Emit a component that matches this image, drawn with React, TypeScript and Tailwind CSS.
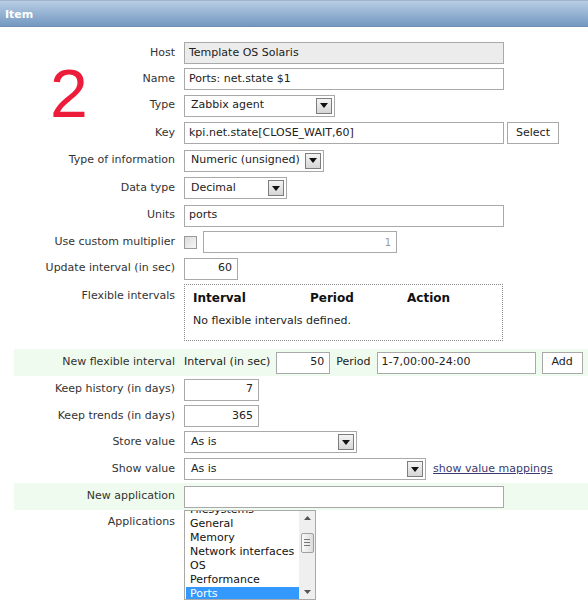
import React from 'react';

const FONT = "font-['DejaVu_Sans',Verdana,sans-serif]";

function Arrow() {
    return (
        <span className="absolute right-[2px] top-1/2 -translate-y-1/2 w-[16px] h-[16px] border border-[#7d7d7d] bg-gradient-to-b from-[#f4f4f4] to-[#d6d6d6] flex items-center justify-center">
            <svg width="8" height="5" viewBox="0 0 8 5">
                <path d="M0 0 L8 0 L4 5 Z" fill="#111" />
            </svg>
        </span>
    );
}

function Select({ value, w }: { value: string; w: string }) {
    return (
        <div className={`relative h-[22px] border border-[#a9a9a9] bg-white pl-[6px] flex items-center text-[#222] ${w}`}>
            {value}
            <Arrow />
        </div>
    );
}

function Input({ value = '', w, right = false, gray = false, muted = false }: { value?: string; w: string; right?: boolean; gray?: boolean; muted?: boolean }) {
    return (
        <div
            className={`h-[22px] border border-[#a9a9a9] flex items-center ${w} ${gray ? 'bg-[#ececec]' : 'bg-white'} ${right ? 'justify-end pr-[5px]' : 'pl-[4px]'} ${muted ? 'text-[#9a9a9a] text-[10px]' : 'text-[#222]'}`}
        >
            {value}
        </div>
    );
}

function Row({ label, children, h = 'h-[27px]', green = false, top = false, labelPad = 'pt-[6px]' }: { label: string; children?: React.ReactNode; h?: string; green?: boolean; top?: boolean; labelPad?: string }) {
    return (
        <div className={`flex ${top ? 'items-start' : 'items-center'} ${h} ${green ? 'bg-[#effbee]' : ''}`}>
            <div className={`w-[161px] shrink-0 text-right text-[#333] ${top ? labelPad : ''}`}>{label}</div>
            <div className={`ml-[9px] flex ${top ? 'items-start' : 'items-center'}`}>{children}</div>
        </div>
    );
}

export default function App() {
    const apps = ['Filesystems', 'General', 'Memory', 'Network interfaces', 'OS', 'Performance', 'Ports'];
    return (
        <div className={`relative w-[588px] h-[607px] bg-white overflow-hidden text-[11px] ${FONT}`}>
            {/* header */}
            <div className="h-[27px] border-t border-[#9fb4cb] border-b border-b-[#6e8fb3] bg-gradient-to-b from-[#b9cee5] to-[#7398c0] flex items-center pl-[5px] pt-[3px]">
                <span className="text-white font-bold text-[11px]">Item</span>
            </div>

            <span className="absolute left-[50px] top-[59px] text-[68px] leading-none text-[#ec1c3a] font-['Liberation_Sans',Arial,sans-serif]">2</span>

            <div className="pl-[14px] pt-[13px]">
                <Row label="Host" h="h-[26px]">
                    <Input value="Template OS Solaris" w="w-[320px]" gray />
                </Row>
                <Row label="Name" h="h-[26px]">
                    <Input value="Ports: net.state $1" w="w-[320px]" />
                </Row>
                <Row label="Type">
                    <Select value="Zabbix agent" w="w-[151px]" />
                </Row>
                <Row label="Key" h="h-[28px]">
                    <Input value="kpi.net.state[CLOSE_WAIT,60]" w="w-[320px]" />
                    <div className="ml-[3px] w-[52px] h-[22px] border border-[#a9a9a9] bg-white flex items-center justify-center text-[#222]">Select</div>
                </Row>
                <Row label="Type of information">
                    <Select value="Numeric (unsigned)" w="w-[140px]" />
                </Row>
                <Row label="Data type" h="h-[28px]">
                    <Select value="Decimal" w="w-[103px]" />
                </Row>
                <Row label="Units">
                    <Input value="ports" w="w-[320px]" />
                </Row>
                <Row label="Use custom multiplier" h="h-[26px]">
                    <div className="w-[13px] h-[13px] border border-[#9a9a9a] bg-gradient-to-br from-[#dcdcdc] to-[#f6f6f6]" />
                    <div className="ml-[6px]">
                        <Input value="1" w="w-[194px]" right muted />
                    </div>
                </Row>
                <Row label="Update interval (in sec)">
                    <Input value="60" w="w-[54px]" right />
                </Row>
                <Row label="Flexible intervals" h="h-[62px]" top>
                    <div className="mt-[2px] w-[319px] h-[57px] border border-dotted border-[#8a8a8a] pl-[8px] pt-[4px] text-[#111]">
                        <div className="flex font-bold text-[12px]">
                            <span className="w-[117px]">Interval</span>
                            <span className="w-[97px]">Period</span>
                            <span>Action</span>
                        </div>
                        <div className="mt-[6px] text-[#222]">No flexible intervals defined.</div>
                    </div>
                </Row>
                <div className="h-[5px]" />
                <Row label="New flexible interval" green h="h-[27px]">
                    <span className="text-[#222]">Interval (in sec)</span>
                    <div className="ml-[6px]">
                        <Input value="50" w="w-[54px]" right />
                    </div>
                    <span className="ml-[6px] text-[#222]">Period</span>
                    <div className="ml-[6px]">
                        <Input value="1-7,00:00-24:00" w="w-[159px]" />
                    </div>
                    <div className="ml-[6px] w-[41px] h-[22px] border border-[#a9a9a9] bg-white flex items-center justify-center text-[#222]">Add</div>
                </Row>
                <Row label="Keep history (in days)">
                    <Input value="7" w="w-[75px]" right />
                </Row>
                <Row label="Keep trends (in days)" h="h-[26px]">
                    <Input value="365" w="w-[75px]" right />
                </Row>
                <Row label="Store value" h="h-[26px]">
                    <Select value="As is" w="w-[173px]" />
                </Row>
                <Row label="Show value" h="h-[28px]">
                    <Select value="As is" w="w-[242px]" />
                    <span className="ml-[7px] underline text-[#3b3a6e]">show value mappings</span>
                </Row>
                <Row label="New application" green h="h-[27px]">
                    <Input w="w-[320px]" />
                </Row>
                <Row label="Applications" h="h-[92px]" top labelPad="pt-[4px]">
                    <div className="w-[132px] h-[90px] border border-[#a9a9a9] bg-white flex overflow-hidden">
                        <div className="flex-1 overflow-hidden pl-[1px]">
                            <div className="-mt-[8px]">
                                {apps.map((a) => (
                                    <div
                                        key={a}
                                        className={`h-[14px] leading-[14px] pl-[4px] whitespace-nowrap ${a === 'Ports' ? 'bg-[#3399ff] text-white' : 'text-[#111]'}`}
                                    >
                                        {a}
                                    </div>
                                ))}
                            </div>
                        </div>
                        <div className="w-[16px] bg-[#efefef] flex flex-col items-center justify-between py-[5px]">
                            <svg width="7" height="4" viewBox="0 0 7 4">
                                <path d="M0 4 L7 4 L3.5 0 Z" fill="#555" />
                            </svg>
                            <div className="w-[13px] h-[20px] border border-[#a0a0a0] rounded-[2px] bg-gradient-to-r from-[#fafafa] to-[#dcdcdc] flex flex-col items-center justify-center gap-[2px]">
                                <div className="w-[6px] h-[1px] bg-[#777]" />
                                <div className="w-[6px] h-[1px] bg-[#777]" />
                                <div className="w-[6px] h-[1px] bg-[#777]" />
                            </div>
                            <div className="h-[12px]" />
                            <svg width="7" height="4" viewBox="0 0 7 4">
                                <path d="M0 0 L7 0 L3.5 4 Z" fill="#555" />
                            </svg>
                        </div>
                    </div>
                </Row>
            </div>
        </div>
    );
}
